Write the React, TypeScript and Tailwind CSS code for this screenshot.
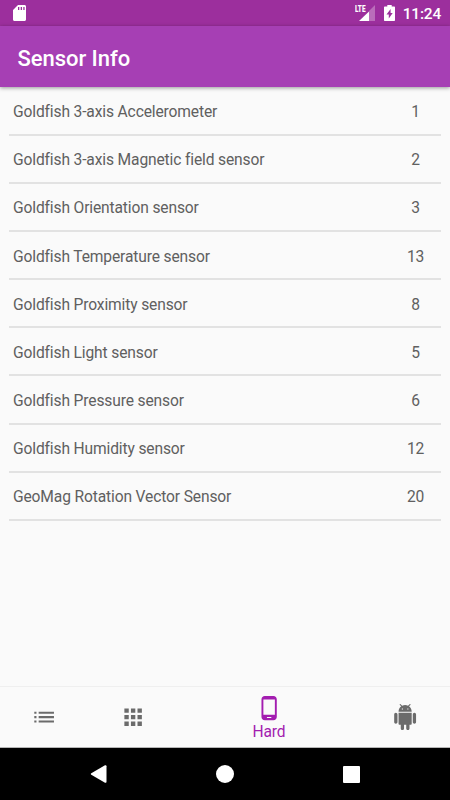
import clsx from 'clsx'
import { ReactNode } from 'react'

interface Sensor {
  name: string
  type: number
}

const sensors: Sensor[] = [
  { name: 'Goldfish 3-axis Accelerometer', type: 1 },
  { name: 'Goldfish 3-axis Magnetic field sensor', type: 2 },
  { name: 'Goldfish Orientation sensor', type: 3 },
  { name: 'Goldfish Temperature sensor', type: 13 },
  { name: 'Goldfish Proximity sensor', type: 8 },
  { name: 'Goldfish Light sensor', type: 5 },
  { name: 'Goldfish Pressure sensor', type: 6 },
  { name: 'Goldfish Humidity sensor', type: 12 },
  { name: 'GeoMag Rotation Vector Sensor', type: 20 },
]

function StatusBar() {
  return (
    <div className="flex h-[26px] items-center bg-[#9c2f9d] pl-[13px] pr-[9px] text-white">
      <svg viewBox="0 0 13 16" className="h-4 w-[13px]">
        <path
          fill="currentColor"
          fillRule="evenodd"
          d="M5 0h6.5C12.3 0 13 .7 13 1.5v13c0 .8-.7 1.5-1.5 1.5h-10C.7 16 0 15.3 0 14.5V5zM5 2v3h1.3V2zM7.7 2v3H9V2zM10.3 2v3h1.3V2z"
        />
      </svg>

      <div className="ml-auto flex items-center">
        <div className="relative h-4 w-5">
          <span className="absolute left-0 top-0 origin-top-left scale-x-[.68] text-[9.5px] font-black leading-[8px]">
            LTE
          </span>
          <svg viewBox="0 0 16 16" className="absolute left-1 top-0 size-4">
            <path fill="currentColor" opacity=".3" d="M16 0v16H10V6z" />
            <path fill="currentColor" d="M10 6.5V16H0z" />
          </svg>
        </div>
        <svg viewBox="0 0 11 16" className="ml-[9px] h-4 w-[11px]">
          <path
            fill="currentColor"
            fillRule="evenodd"
            d="M3.3 0h4.4v1.5H10c.6 0 1 .4 1 1V15c0 .6-.4 1-1 1H1c-.6 0-1-.4-1-1V2.5c0-.6.4-1 1-1h2.3zM6.6 4L2.5 9.5h2.3v4L8.7 8H6.6z"
          />
        </svg>
        <span className="ml-2 pt-[3px] text-[15.5px] font-medium leading-none tracking-[-0.2px]">
          11:24
        </span>
      </div>
    </div>
  )
}

function SensorRow({ name, type }: Sensor) {
  return (
    <li className="flex h-[48.1px] flex-col">
      <div className="flex flex-1 items-center pl-1 pt-1">
        <span className="flex-1">{name}</span>
        <span className="w-[51px] text-center">{type}</span>
      </div>
      <div className="h-[2px] bg-[#e2e2e2]" />
    </li>
  )
}

interface TabProps {
  icon: ReactNode
  label?: string
  active?: boolean
}

function Tab({ icon, label, active }: TabProps) {
  return (
    <button
      className={clsx(
        'flex flex-col items-center justify-center',
        active ? 'w-[184px] pt-0.5 text-[#a31db0]' : 'w-[88.5px] text-[#6b6b6b]',
      )}
    >
      <svg viewBox="0 0 24 24" fill="currentColor" className="size-[26.25px]">
        {icon}
      </svg>
      {label && (
        <span className="-mb-px text-[15.6px] leading-5 tracking-[-0.1px]">
          {label}
        </span>
      )}
    </button>
  )
}

function BottomNavigation() {
  return (
    <nav className="flex h-[62px] border-b border-t border-b-[#b5b5b5] border-t-[#efefef] bg-[#fafafa]">
      <Tab
        icon={
          <path d="M3 13h2v-2H3v2zm0 4h2v-2H3v2zm0-8h2V7H3v2zm4 4h14v-2H7v2zm0 4h14v-2H7v2zM7 7v2h14V7H7z" />
        }
      />
      <Tab
        icon={
          <path d="M4 8h4V4H4v4zm6 12h4v-4h-4v4zm-6 0h4v-4H4v4zm0-6h4v-4H4v4zm6 0h4v-4h-4v4zm6-10v4h4V4h-4zm-6 4h4V4h-4v4zm6 6h4v-4h-4v4zm0 6h4v-4h-4v4z" />
        }
      />
      <Tab
        active
        label="Hard"
        icon={
          <path d="M16 1H8C6.34 1 5 2.34 5 4v16c0 1.66 1.34 3 3 3h8c1.66 0 3-1.34 3-3V4c0-1.66-1.34-3-3-3zm-2 20h-4v-1h4v1zm3.25-3H6.75V4h10.5v14z" />
        }
      />
      <Tab
        icon={
          <path d="M6 18c0 .55.45 1 1 1h1v3.5c0 .83.67 1.5 1.5 1.5s1.5-.67 1.5-1.5V19h2v3.5c0 .83.67 1.5 1.5 1.5s1.5-.67 1.5-1.5V19h1c.55 0 1-.45 1-1V8H6v10zM3.5 8C2.67 8 2 8.67 2 9.5v7c0 .83.67 1.5 1.5 1.5S5 17.33 5 16.5v-7C5 8.67 4.33 8 3.5 8zm17 0c-.83 0-1.5.67-1.5 1.5v7c0 .83.67 1.5 1.5 1.5s1.5-.67 1.5-1.5v-7c0-.83-.67-1.5-1.5-1.5zm-4.97-5.84l1.3-1.3c.2-.2.2-.51 0-.71-.2-.2-.51-.2-.71 0l-1.48 1.48C13.85 1.23 12.95 1 12 1c-.96 0-1.86.23-2.66.63L7.85.15c-.2-.2-.51-.2-.71 0-.2.2-.2.51 0 .71l1.31 1.31C6.97 3.26 6 5.01 6 7h12c0-1.99-.97-3.75-2.47-4.84zM10 5H9V4h1v1zm5 0h-1V4h1v1z" />
        }
      />
    </nav>
  )
}

function SystemNavigation() {
  return (
    <div className="flex h-[52px] items-center bg-black px-[90px] text-white">
      <svg viewBox="0 0 18 18" className="size-[18px]">
        <path
          fill="currentColor"
          d="M1.3 8.2L15 .3c.8-.4 1.5 0 1.5.9v15.6c0 .9-.7 1.3-1.5.9L1.3 9.8c-.6-.4-.6-1.2 0-1.6z"
        />
      </svg>
      <div className="ml-[108px] mr-auto size-[18px] rounded-full bg-white" />
      <div className="size-[17px] rounded-[1px] bg-white" />
    </div>
  )
}

export default function App() {
  return (
    <div className="flex h-[800px] w-[450px] flex-col overflow-hidden bg-[#fafafa] font-['Roboto',sans-serif]">
      <StatusBar />
      <header className="z-10 flex h-[61px] items-center bg-[#a63fb4] pl-[17.5px] pt-[3px] text-white shadow-[0_1px_4px_rgba(0,0,0,0.4)]">
        <h1 className="text-[22px] font-medium tracking-[-0.05px]">
          Sensor Info
        </h1>
      </header>
      <ul className="flex-1 px-[9px] pt-[0.9px] text-[15.6px] tracking-[-0.14px] text-[#606060]">
        {sensors.map((sensor) => (
          <SensorRow key={sensor.name} {...sensor} />
        ))}
      </ul>
      <BottomNavigation />
      <SystemNavigation />
    </div>
  )
}
